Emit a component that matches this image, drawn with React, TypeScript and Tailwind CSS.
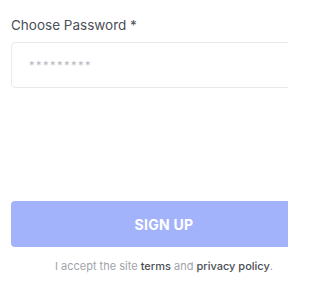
import React from "react";

export default function App() {
  return (
    <div className="w-[288px] h-[288px] overflow-hidden bg-white" style={{ fontFamily: "Inter, 'Noto Sans', sans-serif" }}>
      <div className="w-[306px] ml-[11px] pt-[17px] flex flex-col">
        <label className="text-[13.5px] leading-[16px] text-[#4b4f56]">Choose Password *</label>
        <div className="mt-[9px] h-[46px] rounded-[4px] border border-[#e8eaee] flex items-center pl-[17px]">
          <span className="text-[11px] tracking-[1.5px] text-[#b5b8bd]">*********</span>
        </div>
        <div className="h-[113px]" />
        <button className="h-[46px] rounded-[4px] bg-[#a3b3fb] text-white font-bold text-[14px] tracking-[0.3px]">SIGN UP</button>
        <p className="mt-[12px] text-center text-[11px] leading-[14px] text-[#a0a4aa]">
          I accept the site <span className="text-[#4b4f56] font-medium">terms</span> and <span className="text-[#4b4f56] font-medium">privacy policy</span>.
        </p>
      </div>
    </div>
  );
}
